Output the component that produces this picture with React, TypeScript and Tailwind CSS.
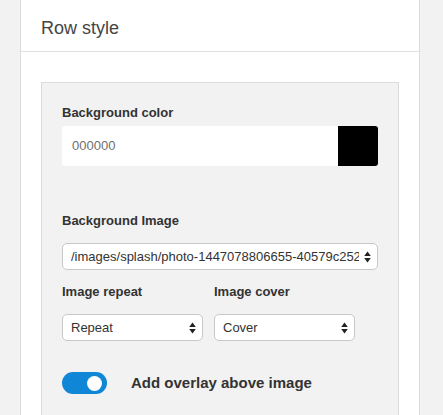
import React from 'react';

function Arrows() {
  return (
    <svg width="7" height="12" viewBox="0 0 7 12" className="absolute right-[6px] top-1/2 -translate-y-1/2">
      <path d="M3.5 0.5 L6.8 5 L0.2 5 Z" fill="#222" />
      <path d="M3.5 11.5 L6.8 7 L0.2 7 Z" fill="#222" />
    </svg>
  );
}

function FakeSelect({ value, className }: { value: string; className: string }) {
  return (
    <div
      className={`relative flex h-[27px] items-center overflow-hidden rounded-[5px] border border-[#c8c8c8] bg-white pl-[8px] pr-[18px] text-[13px] whitespace-nowrap text-[#333] ${className}`}
    >
      <span className="overflow-hidden">{value}</span>
      <Arrows />
    </div>
  );
}

export default function App() {
  return (
    <div className="min-h-screen bg-[#f2f2f2] font-['Liberation_Sans',Arial,sans-serif]">
      <div className="ml-[20px] w-[400px] border-x border-[#dcdcdc] bg-white">
        <div className="flex h-[52px] items-center border-b border-[#e0e0e0] px-[20px] pt-[6px]">
          <h2 className="text-[18px] text-[#444]">Row style</h2>
        </div>
        <div className="px-[20px] pt-[30px]">
          <div className="border border-[#dcdcdc] bg-[#f2f2f2] px-[20px] pt-[21px] pb-[20px]">
            <p className="mb-[4px] text-[13px] leading-[18px] font-bold text-[#333]">Background color</p>
            <div className="flex h-[40px]">
              <div className="flex w-[276px] items-center rounded-l-[3px] bg-white pl-[10px] text-[13px] text-[#6f6f6f]">
                000000
              </div>
              <div className="w-[40px] rounded-r-[3px] bg-black" />
            </div>

            <p className="mt-[46px] mb-[13px] text-[13px] leading-[18px] font-bold text-[#333]">Background Image</p>
            <FakeSelect value="/images/splash/photo-1447078806655-40579c2520d6.jpg" className="w-[316px]" />

            <div className="mt-[13px] flex gap-[11px]">
              <div>
                <p className="mb-[13px] text-[13px] leading-[18px] font-bold text-[#333]">Image repeat</p>
                <FakeSelect value="Repeat" className="w-[141px]" />
              </div>
              <div>
                <p className="mb-[13px] text-[13px] leading-[18px] font-bold text-[#333]">Image cover</p>
                <FakeSelect value="Cover" className="w-[141px]" />
              </div>
            </div>

            <div className="mt-[31px] flex items-center gap-[24px]">
              <div className="relative h-[22px] w-[45px] rounded-full bg-[#0f86d6]">
                <div className="absolute top-[3.5px] right-[5px] h-[15px] w-[15px] rounded-full bg-white" />
              </div>
              <span className="text-[15px] font-bold text-[#333]">Add overlay above image</span>
            </div>
          </div>
        </div>
      </div>
    </div>
  );
}
